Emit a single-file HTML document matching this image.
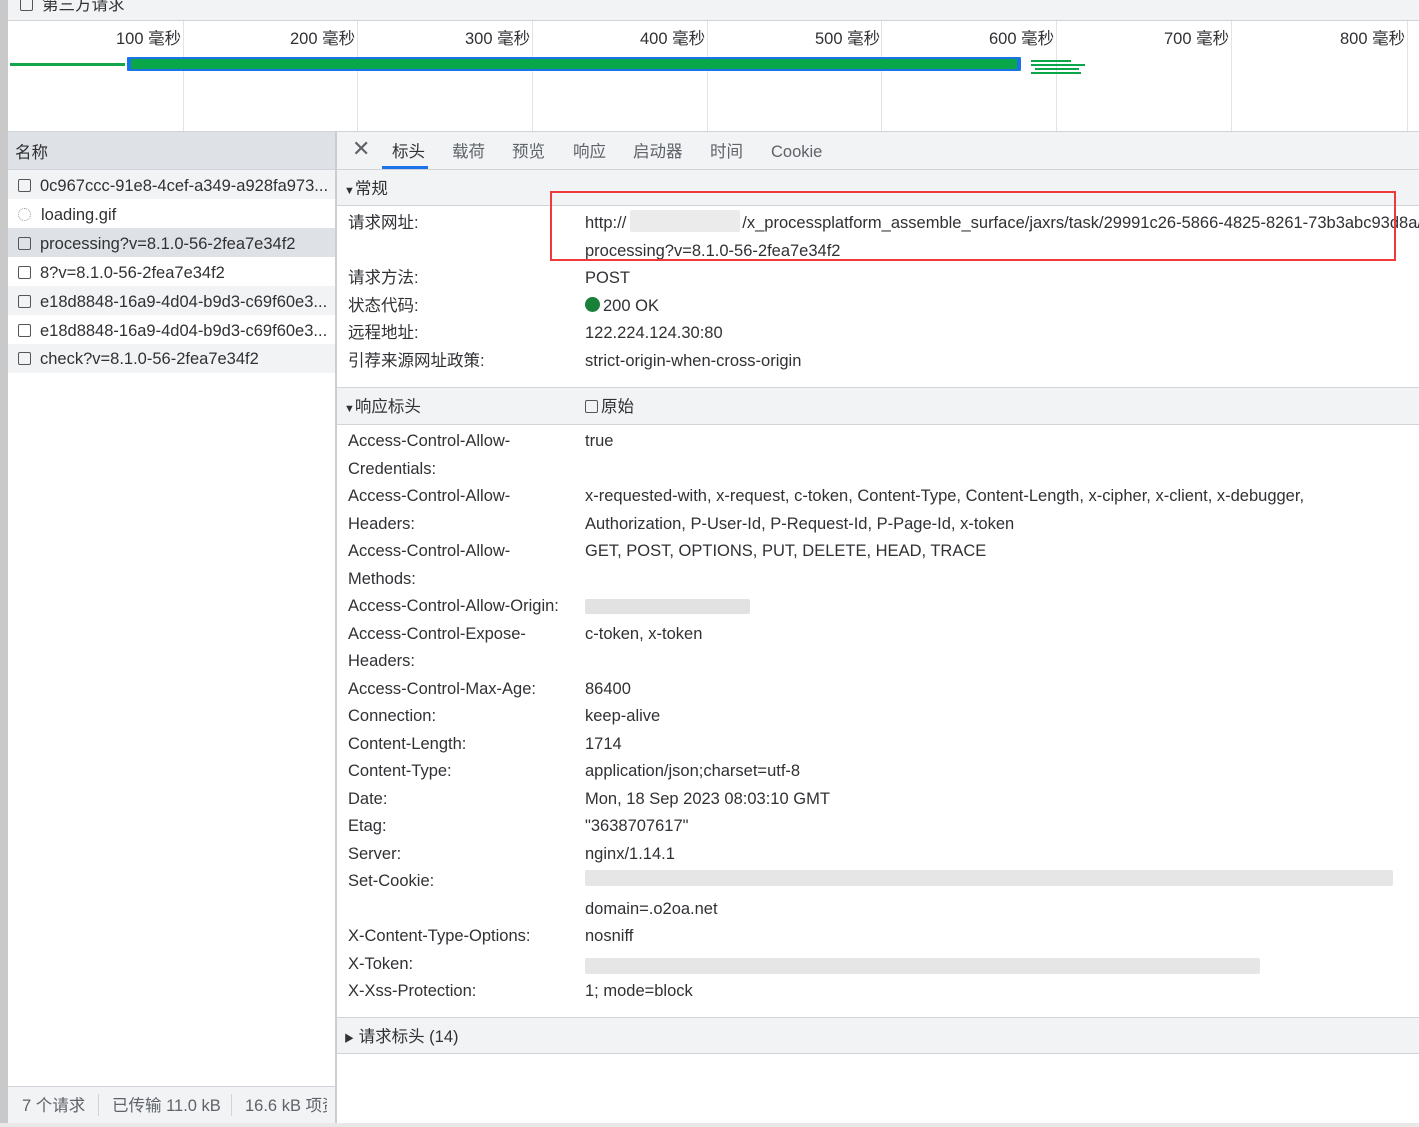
<!DOCTYPE html>
<html><head><meta charset="utf-8"><style>
*{margin:0;padding:0;box-sizing:border-box}
body{width:1419px;height:1127px;position:relative;overflow:hidden;background:#fff;font-family:"Liberation Sans","Noto Sans CJK SC",sans-serif;font-size:16.5px;color:#303134;letter-spacing:0}
.a{position:absolute;white-space:nowrap;line-height:20px;margin-top:1px}
.bx{position:absolute;background:#f1f3f4}
.ln{position:absolute;background:#d0d3d7}
.cb{display:inline-block;width:13px;height:13px;border:1.5px solid #555;border-radius:2px;vertical-align:-1px;margin-right:9px}
.blur{position:absolute;background:#e2e2e2;border-radius:2px}
</style></head><body>
<div class="bx" style="left:0;top:0;width:1419px;height:20px"></div>
<div class="a" style="left:20px;top:-6px"><span class="cb"></span>第三方请求</div>
<div class="ln" style="left:0;top:20px;width:1419px;height:1px"></div>
<div style="position:absolute;left:0;top:0;width:8px;height:1127px;background:#c9c9c9"></div>
<div class="ln" style="left:183px;top:21px;width:1px;height:110px;background:#e3e3e3"></div>
<div class="ln" style="left:357px;top:21px;width:1px;height:110px;background:#e3e3e3"></div>
<div class="ln" style="left:532px;top:21px;width:1px;height:110px;background:#e3e3e3"></div>
<div class="ln" style="left:707px;top:21px;width:1px;height:110px;background:#e3e3e3"></div>
<div class="ln" style="left:881px;top:21px;width:1px;height:110px;background:#e3e3e3"></div>
<div class="ln" style="left:1056px;top:21px;width:1px;height:110px;background:#e3e3e3"></div>
<div class="ln" style="left:1231px;top:21px;width:1px;height:110px;background:#e3e3e3"></div>
<div class="ln" style="left:1407px;top:21px;width:1px;height:110px;background:#e3e3e3"></div>
<div class="a" style="left:116px;top:28px">100 毫秒</div>
<div class="a" style="left:290px;top:28px">200 毫秒</div>
<div class="a" style="left:465px;top:28px">300 毫秒</div>
<div class="a" style="left:640px;top:28px">400 毫秒</div>
<div class="a" style="left:815px;top:28px">500 毫秒</div>
<div class="a" style="left:989px;top:28px">600 毫秒</div>
<div class="a" style="left:1164px;top:28px">700 毫秒</div>
<div class="a" style="left:1340px;top:28px">800 毫秒</div>
<div style="position:absolute;left:10px;top:63px;width:115px;height:3px;background:#12a84a"></div>
<div style="position:absolute;left:127px;top:57px;width:894px;height:14px;background:#1a73e8;border-radius:1px"></div>
<div style="position:absolute;left:131px;top:59px;width:886px;height:10px;background:#0aa64a"></div>
<div style="position:absolute;left:1031px;top:60px;width:40px;height:2px;background:#0aa64a"></div>
<div style="position:absolute;left:1031px;top:64px;width:54px;height:2px;background:#0aa64a"></div>
<div style="position:absolute;left:1035px;top:68px;width:44px;height:2px;background:#0aa64a"></div>
<div style="position:absolute;left:1031px;top:72px;width:50px;height:2px;background:#0aa64a"></div>
<div class="ln" style="left:8px;top:131px;width:1411px;height:1px"></div>
<div style="position:absolute;left:8px;top:132px;width:327px;height:37px;background:#dee1e5"></div>
<div class="a" style="left:15px;top:142px">名称</div>
<div style="position:absolute;left:8px;top:169px;width:327px;height:1px;background:#d0d3d7"></div>
<div style="position:absolute;left:8px;top:170px;width:327px;height:29px;background:#f1f3f4"></div>
<div style="position:absolute;left:8px;top:228px;width:327px;height:29px;background:#dee1e5"></div>
<div style="position:absolute;left:8px;top:286px;width:327px;height:29px;background:#f1f3f4"></div>
<div style="position:absolute;left:8px;top:344px;width:327px;height:29px;background:#f1f3f4"></div>
<div class="a" style="left:18px;top:175px;width:315px;overflow:hidden"><span class="cb"></span>0c967ccc-91e8-4cef-a349-a928fa973...</div>
<div class="a" style="left:18px;top:204px"><span style="display:inline-block;width:13px;height:13px;border:1px dotted #999;border-radius:50%;margin-right:10px;vertical-align:-1px"></span>loading.gif</div>
<div class="a" style="left:18px;top:233px"><span class="cb"></span>processing?v=8.1.0-56-2fea7e34f2</div>
<div class="a" style="left:18px;top:262px"><span class="cb"></span>8?v=8.1.0-56-2fea7e34f2</div>
<div class="a" style="left:18px;top:291px;width:315px;overflow:hidden"><span class="cb"></span>e18d8848-16a9-4d04-b9d3-c69f60e3...</div>
<div class="a" style="left:18px;top:320px;width:315px;overflow:hidden"><span class="cb"></span>e18d8848-16a9-4d04-b9d3-c69f60e3...</div>
<div class="a" style="left:18px;top:348px"><span class="cb"></span>check?v=8.1.0-56-2fea7e34f2</div>
<div style="position:absolute;left:8px;top:1086px;width:327px;height:37px;background:#f1f3f4;border-top:1px solid #d0d3d7"></div>
<div class="a" style="left:22px;top:1095px;color:#5f6368">7 个请求</div>
<div class="ln" style="left:98px;top:1094px;width:1px;height:22px"></div>
<div class="a" style="left:112px;top:1095px;color:#5f6368">已传输 11.0 kB</div>
<div class="ln" style="left:231px;top:1094px;width:1px;height:22px"></div>
<div class="a" style="left:245px;top:1095px;color:#5f6368;width:82px;overflow:hidden">16.6 kB 项资源</div>
<div class="ln" style="left:335px;top:131px;width:2px;height:996px;background:#cbcdd1"></div>
<div class="ln" style="left:0;top:1123px;width:1419px;height:4px;background:#e8e8e8"></div>
<div class="bx" style="left:337px;top:132px;width:1082px;height:37px"></div>
<div class="a" style="left:352px;top:138px;font-size:22px;color:#5f6368">✕</div>
<div class="a" style="left:392px;top:141px">标头</div>
<div style="position:absolute;left:382px;top:166px;width:46px;height:3px;background:#1a73e8"></div>
<div class="a" style="left:452px;top:141px;color:#5f6368">载荷</div>
<div class="a" style="left:512px;top:141px;color:#5f6368">预览</div>
<div class="a" style="left:573px;top:141px;color:#5f6368">响应</div>
<div class="a" style="left:633px;top:141px;color:#5f6368">启动器</div>
<div class="a" style="left:710px;top:141px;color:#5f6368">时间</div>
<div class="a" style="left:771px;top:141px;color:#5f6368">Cookie</div>
<div class="ln" style="left:337px;top:169px;width:1082px;height:1px"></div>
<div class="bx" style="left:337px;top:170px;width:1082px;height:35px"></div>
<div class="a" style="left:344px;top:178px"><span style="font-size:11px">▼</span>常规</div>
<div class="ln" style="left:337px;top:205px;width:1082px;height:1px"></div>
<div class="a" style="left:348px;top:212px">请求网址:</div>
<div class="a" style="left:585px;top:212px">http://<span style="display:inline-block;width:116px"></span>/x_processplatform_assemble_surface/jaxrs/task/29991c26-5866-4825-8261-73b3abc93d8a/</div>
<div class="blur" style="left:630px;top:210px;width:110px;height:22px;background:#ebebeb"></div>
<div class="a" style="left:585px;top:240px">processing?v=8.1.0-56-2fea7e34f2</div>
<div style="position:absolute;left:550px;top:191px;width:846px;height:70px;border:2px solid #ee3a3a"></div>
<div class="a" style="left:348px;top:267px">请求方法:</div><div class="a" style="left:585px;top:267px">POST</div>
<div class="a" style="left:348px;top:295px">状态代码:</div><div class="a" style="left:585px;top:295px"><span style="display:inline-block;width:15px;height:15px;border-radius:50%;background:#188038;vertical-align:-1px;margin-right:3px"></span>200 OK</div>
<div class="a" style="left:348px;top:322px">远程地址:</div><div class="a" style="left:585px;top:322px">122.224.124.30:80</div>
<div class="a" style="left:348px;top:350px">引荐来源网址政策:</div><div class="a" style="left:585px;top:350px">strict-origin-when-cross-origin</div>
<div class="ln" style="left:337px;top:387px;width:1082px;height:1px"></div>
<div class="bx" style="left:337px;top:388px;width:1082px;height:36px"></div>
<div class="a" style="left:344px;top:396px"><span style="font-size:11px">▼</span>响应标头</div>
<div class="a" style="left:585px;top:396px"><span class="cb" style="margin-right:3px"></span>原始</div>
<div class="ln" style="left:337px;top:424px;width:1082px;height:1px"></div>
<div class="a" style="left:348px;top:430px">Access-Control-Allow-</div><div class="a" style="left:585px;top:430px">true</div>
<div class="a" style="left:348px;top:458px">Credentials:</div>
<div class="a" style="left:348px;top:485px">Access-Control-Allow-</div><div class="a" style="left:585px;top:485px">x-requested-with, x-request, c-token, Content-Type, Content-Length, x-cipher, x-client, x-debugger,</div>
<div class="a" style="left:348px;top:513px">Headers:</div><div class="a" style="left:585px;top:513px">Authorization, P-User-Id, P-Request-Id, P-Page-Id, x-token</div>
<div class="a" style="left:348px;top:540px">Access-Control-Allow-</div><div class="a" style="left:585px;top:540px">GET, POST, OPTIONS, PUT, DELETE, HEAD, TRACE</div>
<div class="a" style="left:348px;top:568px">Methods:</div>
<div class="a" style="left:348px;top:595px">Access-Control-Allow-Origin:</div><div class="blur" style="left:585px;top:599px;width:165px;height:15px"></div>
<div class="a" style="left:348px;top:623px">Access-Control-Expose-</div><div class="a" style="left:585px;top:623px">c-token, x-token</div>
<div class="a" style="left:348px;top:650px">Headers:</div>
<div class="a" style="left:348px;top:678px">Access-Control-Max-Age:</div><div class="a" style="left:585px;top:678px">86400</div>
<div class="a" style="left:348px;top:705px">Connection:</div><div class="a" style="left:585px;top:705px">keep-alive</div>
<div class="a" style="left:348px;top:733px">Content-Length:</div><div class="a" style="left:585px;top:733px">1714</div>
<div class="a" style="left:348px;top:760px">Content-Type:</div><div class="a" style="left:585px;top:760px">application/json;charset=utf-8</div>
<div class="a" style="left:348px;top:788px">Date:</div><div class="a" style="left:585px;top:788px">Mon, 18 Sep 2023 08:03:10 GMT</div>
<div class="a" style="left:348px;top:815px">Etag:</div><div class="a" style="left:585px;top:815px">"3638707617"</div>
<div class="a" style="left:348px;top:843px">Server:</div><div class="a" style="left:585px;top:843px">nginx/1.14.1</div>
<div class="a" style="left:348px;top:870px">Set-Cookie:</div><div class="blur" style="left:585px;top:870px;width:808px;height:16px;background:#e6e6e6"></div>
<div class="a" style="left:585px;top:898px">domain=.o2oa.net</div>
<div class="a" style="left:348px;top:925px">X-Content-Type-Options:</div><div class="a" style="left:585px;top:925px">nosniff</div>
<div class="a" style="left:348px;top:953px">X-Token:</div><div class="blur" style="left:585px;top:958px;width:675px;height:16px;background:#e6e6e6"></div>
<div class="a" style="left:348px;top:980px">X-Xss-Protection:</div><div class="a" style="left:585px;top:980px">1; mode=block</div>
<div class="ln" style="left:337px;top:1017px;width:1082px;height:1px"></div>
<div class="bx" style="left:337px;top:1018px;width:1082px;height:35px"></div>
<div class="a" style="left:344px;top:1026px"><span style="font-size:10px">▶</span> 请求标头 (14)</div>
<div class="ln" style="left:337px;top:1053px;width:1082px;height:1px"></div>
</body></html>
